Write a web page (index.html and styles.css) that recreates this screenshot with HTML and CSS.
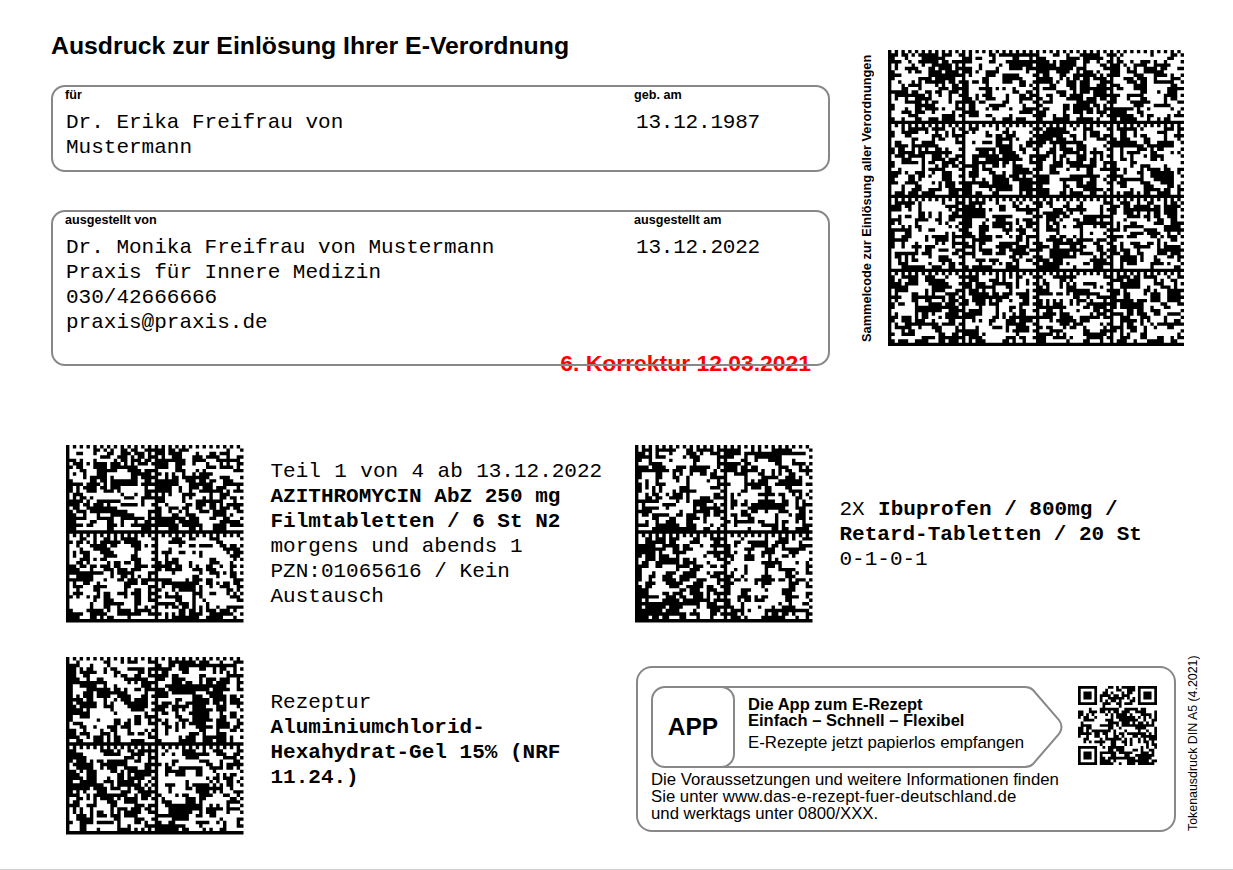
FILE: index.html
```html
<!DOCTYPE html>
<html lang="de">
<head>
<meta charset="utf-8">
<title>Ausdruck zur Einlösung Ihrer E-Verordnung</title>
<link rel="stylesheet" href="styles.css">
</head>
<body>
<main class="sheet">
  <section class="top">
    <div class="top-main">
      <h1 class="title">Ausdruck zur Einlösung Ihrer E-Verordnung</h1>
      <div class="box box-patient">
        <div class="col col-name">
          <div class="label">für</div>
          <div class="value">Dr. Erika Freifrau von<br>Mustermann</div>
        </div>
        <div class="col col-date">
          <div class="label">geb. am</div>
          <div class="value">13.12.1987</div>
        </div>
      </div>
      <div class="box box-issuer">
        <div class="col col-name">
          <div class="label">ausgestellt von</div>
          <div class="value">Dr. Monika Freifrau von Mustermann<br>Praxis für Innere Medizin<br>030/42666666<br>praxis@praxis.de</div>
        </div>
        <div class="col col-date">
          <div class="label">ausgestellt am</div>
          <div class="value">13.12.2022</div>
        </div>
        <div class="correction">6. Korrektur 12.03.2021</div>
      </div>
    </div>
    <div class="collective">
      <div class="collective-label">Sammelcode zur Einlösung aller Verordnungen</div>
      <svg class="dm dm-large" viewBox="0 0 88 88" data-seed="11" data-regions="4"><path></path></svg>
    </div>
  </section>

  <section class="items">
    <article class="item">
      <svg class="dm" viewBox="0 0 52 52" data-seed="23" data-regions="2"><path></path></svg>
      <p class="item-text"><span class="wide-words">Teil 1 von 4 ab 13.12.2022</span><br><b>AZITHROMYCIN AbZ 250 mg<br>Filmtabletten / 6 St N2</b><br>morgens und abends 1<br>PZN:01065616 / Kein<br>Austausch</p>
    </article>
    <article class="item item-right">
      <svg class="dm" viewBox="0 0 52 52" data-seed="37" data-regions="2"><path></path></svg>
      <p class="item-text"><span class="wide-words">2X </span><b>Ibuprofen / 800mg /<br>Retard-Tabletten / 20 St</b><br>0-1-0-1</p>
    </article>
    <article class="item">
      <svg class="dm" viewBox="0 0 52 52" data-seed="51" data-regions="2"><path></path></svg>
      <p class="item-text item-text-raised">Rezeptur<br><b>Aluminiumchlorid-<br>Hexahydrat-Gel 15% (NRF<br>11.24.)</b></p>
    </article>
    <div class="app-wrap">
      <aside class="app-card">
        <div class="app-info">
          <div class="banner">
            <svg class="banner-shape" viewBox="0 0 412 82" aria-hidden="true"><path d="M14 1H374q5 0 8 3l26 30q5 7 0 14l-26 30q-3 3-8 3H14"></path></svg>
            <div class="app-badge">APP</div>
            <div class="banner-text">
              <div class="banner-head">Die App zum E-Rezept<br>Einfach – Schnell – Flexibel</div>
              <div class="banner-sub">E-Rezepte jetzt papierlos empfangen</div>
            </div>
          </div>
          <p class="app-note">Die Voraussetzungen und weitere Informationen finden<br>Sie unter <span class="url">www.das-e-rezept-fuer-deutschland.de</span><br>und werktags unter 0800/XXX.</p>
        </div>
        <svg class="qr" viewBox="0 0 29 29" data-seed="73"><path></path></svg>
      </aside>
      <div class="form-label">Tokenausdruck DIN A5 (4.2021)</div>
    </div>
  </section>
</main>
<script src="codes.js"></script>
</body>
</html>
```
FILE: styles.css
```css
* { box-sizing: border-box; }
html { margin: 0; padding: 0; background: #fff; }
body { margin: 0; padding: 0; font-family: "Liberation Sans", Arial, sans-serif; color: #000; }

.sheet {
  width: 1233px;
  height: 870px;
  border-bottom: 1px solid #ccc;
  padding: 32px 0 0 51px;
  overflow: hidden;
}

.top { display: flex; height: 413px; }
.top-main { width: 779px; }

.title {
  margin: 0 0 25px;
  font-size: 24.8px;
  line-height: 28px;
  font-weight: 700;
}

.box {
  position: relative;
  display: flex;
  border: 2px solid #888;
  border-radius: 14px;
  margin-bottom: 38px;
}
.box-patient { height: 87px; }
.box-issuer { height: 156px; }

.col-name { width: 568px; padding-left: 12px; }
.col-date { padding-left: 13px; }

.label {
  font-size: 12.6px;
  line-height: 14px;
  font-weight: 700;
  margin-top: 1px;
}

.value {
  font-family: "Liberation Mono", "Courier New", monospace;
  font-size: 21px;
  line-height: 25px;
  margin: 8px 0 0 1px;
}
.col-date .value { margin-left: 2px; letter-spacing: -0.2px; }

.correction {
  position: absolute;
  z-index: -1;
  right: 17px;
  bottom: -12px;
  color: #f00;
  font-size: 22.9px;
  line-height: 26px;
  font-weight: 700;
}

.collective { display: flex; margin-left: 30px; padding-top: 18px; height: 314px; }
.collective-label {
  writing-mode: vertical-rl;
  transform: rotate(180deg);
  width: 14px;
  height: 296px;
  font-size: 12.8px;
  line-height: 14px;
  font-weight: 700;
  text-align: center;
  margin-right: 14px;
}

.dm { display: block; width: 177.5px; height: 177.5px; flex: none; }
.dm-large { width: 296px; height: 296px; }
.dm path, .qr path { fill: #000; }

.items {
  display: grid;
  grid-template-columns: 569px 1fr;
  grid-auto-rows: 178px;
  row-gap: 34px;
  margin-left: 15px;
}
.item { display: flex; align-items: center; }
.item-text {
  margin: 0 0 0 27px;
  font-family: "Liberation Mono", "Courier New", monospace;
  font-size: 21px;
  line-height: 25px;
}
.item-text-raised { margin-top: -12px; }
.wide-words { word-spacing: 0.8px; }

.app-wrap { display: flex; align-items: flex-start; margin: 9px 0 0 1px; }
.app-card {
  display: flex;
  width: 540px;
  height: 166px;
  border: 2px solid #888;
  border-radius: 16px;
  padding: 18px 0 0 13px;
}
.app-info { width: 414px; }
.banner { position: relative; display: flex; height: 82px; width: 412px; }
.banner-shape { position: absolute; left: 0; top: 0; width: 412px; height: 82px; }
.banner-shape path { fill: none; stroke: #888; stroke-width: 2; }
.app-badge {
  position: relative;
  display: flex;
  align-items: center;
  justify-content: center;
  width: 84px;
  height: 82px;
  border: 2px solid #888;
  border-radius: 14px;
  font-size: 24.5px;
  font-weight: 700;
}
.banner-text { position: relative; margin-left: 13px; padding-top: 10px; }
.banner-head { font-size: 16.5px; line-height: 16px; font-weight: 700; }
.banner-sub { font-size: 16.8px; line-height: 16px; margin-top: 7px; }
.app-note { margin: 3px 0 0; font-size: 16.75px; line-height: 17px; white-space: nowrap; }
.url { letter-spacing: 0.17px; }
.qr { display: block; width: 79px; height: 79px; margin-left: 13px; flex: none; }

.form-label {
  writing-mode: vertical-rl;
  transform: rotate(180deg);
  width: 14px;
  height: 177px;
  margin: -12px 0 0 10px;
  font-size: 12.4px;
  line-height: 14px;
  text-align: left;
  white-space: nowrap;
}
```
FILE: codes.js
```js
function rng(seed) {
  var a = seed * 2654435761 >>> 0;
  return function () {
    a = (a + 0x6D2B79F5) >>> 0;
    var t = a;
    t = Math.imul(t ^ (t >>> 15), t | 1);
    t ^= t + Math.imul(t ^ (t >>> 7), t | 61);
    return ((t ^ (t >>> 14)) >>> 0) / 4294967296;
  };
}

function noise(n, seed, clump) {
  var r = rng(seed), grid = [], x, y;
  for (y = 0; y < n; y++) {
    grid.push([]);
    for (x = 0; x < n; x++) {
      var p = 0.5;
      if (x > 0) p += grid[y][x - 1] ? clump : -clump;
      if (y > 0) p += grid[y - 1][x] ? clump : -clump;
      grid[y].push(r() < p);
    }
  }
  return grid;
}

function toPath(cells) {
  var d = "";
  cells.forEach(function (row, y) {
    var x = 0;
    while (x < row.length) {
      if (!row[x]) { x++; continue; }
      var s = x;
      while (x < row.length && row[x]) x++;
      d += "M" + s + " " + y + "h" + (x - s) + "v1h-" + (x - s) + "z";
    }
  });
  return d;
}

document.querySelectorAll(".dm").forEach(function (svg) {
  var n = svg.viewBox.baseVal.width;
  var size = n / Number(svg.dataset.regions);
  var grid = noise(n, Number(svg.dataset.seed), 0.12);
  for (var y = 0; y < n; y++) {
    for (var x = 0; x < n; x++) {
      var rx = x % size, ry = y % size;
      if (rx === 0 || ry === size - 1) grid[y][x] = true;
      else if (ry === 0) grid[y][x] = x % 2 === 0;
      else if (rx === size - 1) grid[y][x] = y % 2 === 1;
    }
  }
  svg.querySelector("path").setAttribute("d", toPath(grid));
});

document.querySelectorAll(".qr").forEach(function (svg) {
  var n = svg.viewBox.baseVal.width;
  var grid = noise(n, Number(svg.dataset.seed), 0.05);
  function finder(ox, oy) {
    for (var y = -1; y < 8; y++) {
      for (var x = -1; x < 8; x++) {
        var px = ox + x, py = oy + y;
        if (px < 0 || py < 0 || px >= n || py >= n) continue;
        var ring = x >= 0 && x <= 6 && y >= 0 && y <= 6 && (x === 0 || x === 6 || y === 0 || y === 6);
        var core = x >= 2 && x <= 4 && y >= 2 && y <= 4;
        grid[py][px] = ring || core;
      }
    }
  }
  finder(0, 0);
  finder(n - 7, 0);
  finder(0, n - 7);
  svg.querySelector("path").setAttribute("d", toPath(grid));
});
```
